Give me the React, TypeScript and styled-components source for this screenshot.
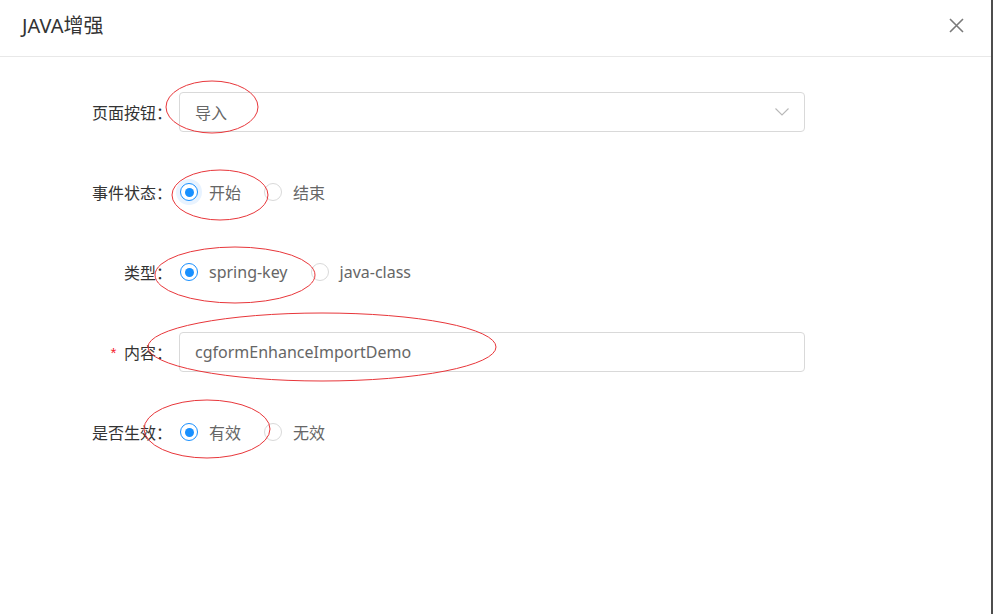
import React from 'react';
import styled, {createGlobalStyle} from 'styled-components';

const GlobalStyle = createGlobalStyle`
html, body {
    margin: 0;
    padding: 0;
    background: #fff;
}
body {
    font-family: "Noto Sans", "Noto Sans CJK SC", sans-serif;
    -webkit-font-smoothing: antialiased;
}
`

type Option = {label: string, checked?: boolean};

const events: Option[] = [{label: '开始', checked: true}, {label: '结束'}];
const kinds: Option[] = [{label: 'spring-key', checked: true}, {label: 'java-class'}];
const actives: Option[] = [{label: '有效', checked: true}, {label: '无效'}];

const marks = [
    {cx: 212, cy: 107, rx: 46, ry: 26},
    {cx: 220, cy: 195, rx: 48, ry: 25},
    {cx: 235, cy: 275, rx: 80, ry: 28},
    {cx: 322, cy: 347, rx: 174, ry: 34},
    {cx: 207, cy: 429, rx: 63, ry: 29},
];

const Radios = ({options, focused}: {options: Option[], focused?: boolean}) => (
    <RadioGroup>
        {options.map(o => (
            <RadioItem key={o.label}>
                <Circle $checked={!!o.checked} $focused={!!(focused && o.checked)}/>
                <RadioText>{o.label}</RadioText>
            </RadioItem>
        ))}
    </RadioGroup>
);

const App = () => {
    return (
        <Modal>
            <GlobalStyle/>
            <Header>
                <Title>JAVA增强</Title>
                <Close aria-label='close'>
                    <svg width='15' height='15' viewBox='0 0 15 15'>
                        <path d='M1 1 L14 14 M14 1 L1 14' stroke='#7a7a7a' strokeWidth='1.6' fill='none'/>
                    </svg>
                </Close>
            </Header>

            <Body>
                <Row>
                    <Label>页面按钮：</Label>
                    <Field>
                        <FieldText>导入</FieldText>
                        <svg width='14' height='8' viewBox='0 0 14 8'>
                            <path d='M0.5 0.5 L7 7 L13.5 0.5' stroke='#b8b8b8' strokeWidth='1.1' fill='none'/>
                        </svg>
                    </Field>
                </Row>
                <Row>
                    <Label>事件状态：</Label>
                    <Radios options={events} focused/>
                </Row>
                <Row>
                    <Label>类型：</Label>
                    <Radios options={kinds}/>
                </Row>
                <Row>
                    <Label><Required>*</Required>内容：</Label>
                    <Field>
                        <FieldText>cgformEnhanceImportDemo</FieldText>
                    </Field>
                </Row>
                <Row>
                    <Label>是否生效：</Label>
                    <Radios options={actives}/>
                </Row>
            </Body>

            <Marks width='993' height='614' viewBox='0 0 993 614'>
                {marks.map((m, i) => (
                    <ellipse key={i} cx={m.cx} cy={m.cy} rx={m.rx} ry={m.ry}
                        fill='none' stroke='#e8363a' strokeWidth='1'/>
                ))}
            </Marks>
        </Modal>
    );
};

export default App;


const Modal = styled.div`
position: relative;
width: 991px;
height: 614px;
background: #fff;
border-right: 2px solid #4d4d4d;
overflow: hidden;
`

const Header = styled.div`
display: flex;
align-items: center;
justify-content: space-between;
height: 56px;
padding: 0 27px 0 22px;
border-bottom: 1px solid #e8e8e8;
`

const Title = styled.div`
font-size: 20px;
color: #333;
margin-top: -7px;
`

const Close = styled.div`
display: flex;
align-items: center;
margin-top: -6px;
cursor: pointer;
`

const Body = styled.div`
display: flex;
flex-direction: column;
gap: 40px;
padding-top: 35px;
`

const Row = styled.div`
display: grid;
grid-template-columns: 172px 626px;
column-gap: 7px;
align-items: center;
height: 40px;
`

const Label = styled.div`
text-align: right;
font-size: 16px;
color: #333;
white-space: nowrap;
`

const Required = styled.span`
color: #f5222d;
font-family: "Liberation Mono", monospace;
font-size: 15px;
margin-right: 6px;
`

const Field = styled.div`
display: flex;
align-items: center;
justify-content: space-between;
box-sizing: border-box;
height: 40px;
padding: 0 15px 0 15px;
border: 1px solid #d9d9d9;
border-radius: 4px;
`

const FieldText = styled.span`
font-size: 16px;
color: #666;
`

const RadioGroup = styled.div`
display: flex;
align-items: center;
`

const RadioItem = styled.label`
display: flex;
align-items: center;
margin-right: 11px;
padding-left: 1px;
cursor: pointer;
`

const Circle = styled.span<{$checked: boolean, $focused: boolean}>`
position: relative;
box-sizing: border-box;
width: 18px;
height: 18px;
border-radius: 50%;
border: 1px solid ${p => p.$checked ? '#1890ff' : '#d9d9d9'};
background: #fff;
box-shadow: ${p => p.$focused ? '0 0 0 4px #e8f3ff' : 'none'};

&::after{
    content: '';
    display: ${p => p.$checked ? 'block' : 'none'};
    position: absolute;
    left: 3.5px;
    top: 3.5px;
    width: 9px;
    height: 9px;
    border-radius: 50%;
    background: #1890ff;
}
`

const RadioText = styled.span`
font-size: 16px;
color: #666;
padding: 0 11px;
`

const Marks = styled.svg`
position: absolute;
left: 0;
top: 0;
pointer-events: none;
`
